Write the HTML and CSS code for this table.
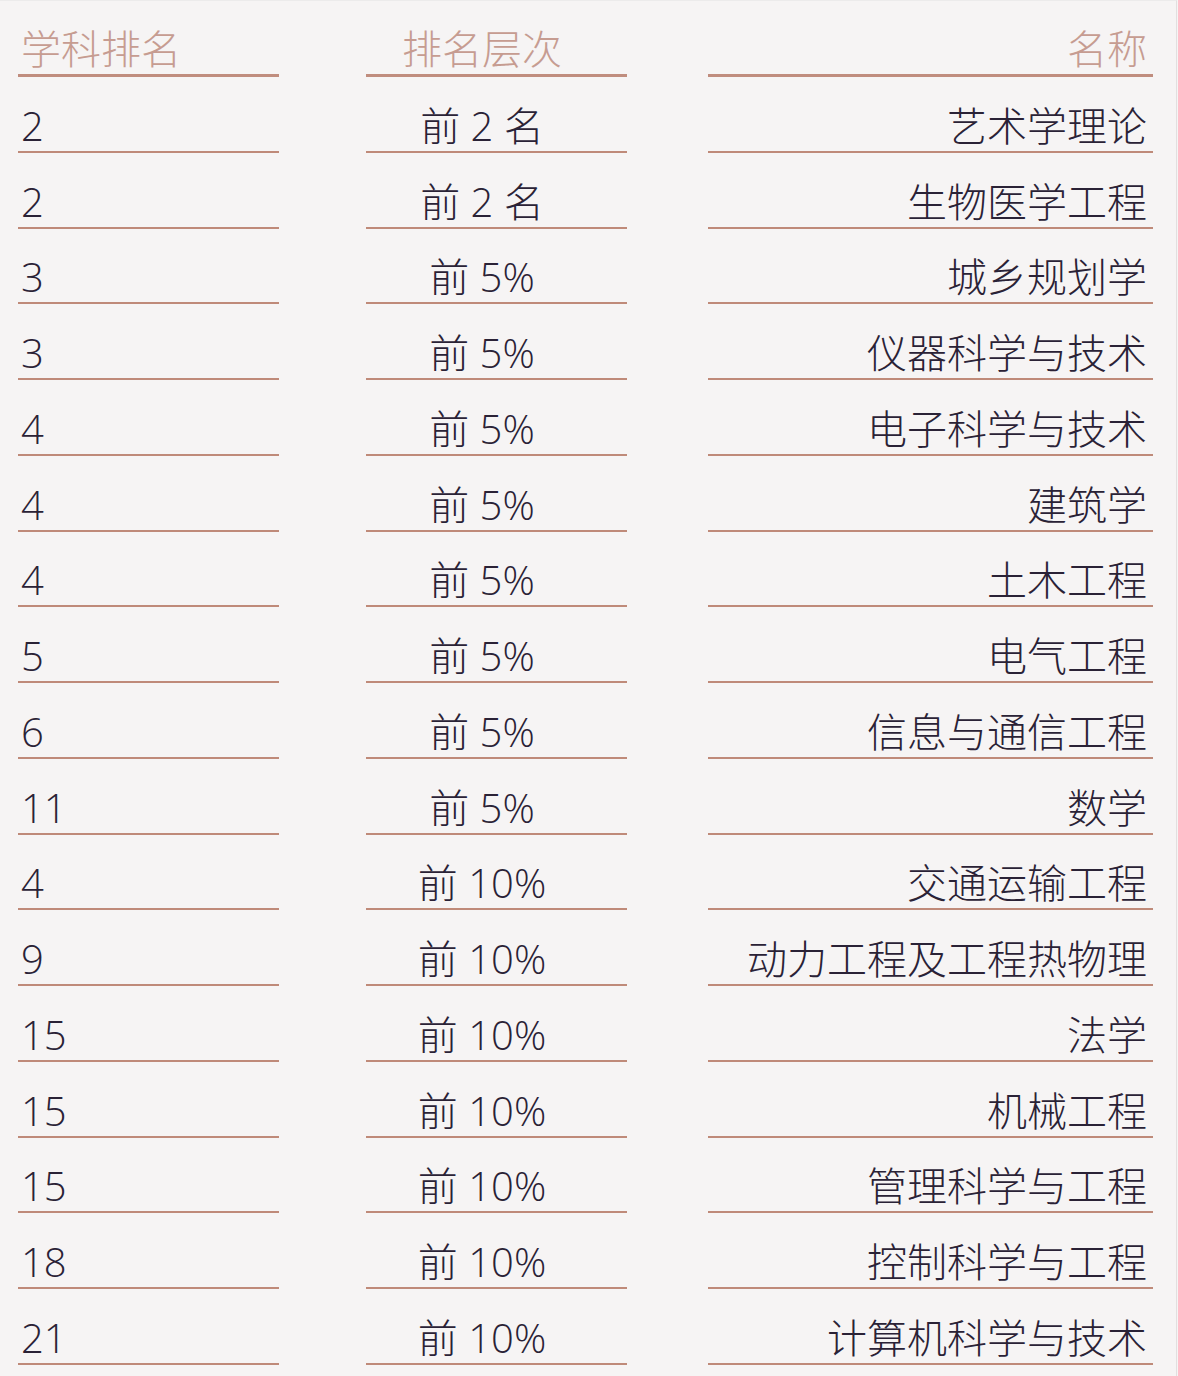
FILE: index.html
```html
<!DOCTYPE html>
<html lang="zh-CN">
<head>
<meta charset="utf-8">
<title>学科排名</title>
<link rel="stylesheet" href="styles.css">
</head>
<body>
<div class="page">
  <div class="table">
    <div class="cell head c1">学科排名</div>
    <div class="cell head c2">排名层次</div>
    <div class="cell head c3">名称</div>

    <div class="cell c1">2</div><div class="cell c2">前 2 名</div><div class="cell c3">艺术学理论</div>
    <div class="cell c1">2</div><div class="cell c2">前 2 名</div><div class="cell c3">生物医学工程</div>
    <div class="cell c1">3</div><div class="cell c2">前 5%</div><div class="cell c3">城乡规划学</div>
    <div class="cell c1">3</div><div class="cell c2">前 5%</div><div class="cell c3">仪器科学与技术</div>
    <div class="cell c1">4</div><div class="cell c2">前 5%</div><div class="cell c3">电子科学与技术</div>
    <div class="cell c1">4</div><div class="cell c2">前 5%</div><div class="cell c3">建筑学</div>
    <div class="cell c1">4</div><div class="cell c2">前 5%</div><div class="cell c3">土木工程</div>
    <div class="cell c1">5</div><div class="cell c2">前 5%</div><div class="cell c3">电气工程</div>
    <div class="cell c1">6</div><div class="cell c2">前 5%</div><div class="cell c3">信息与通信工程</div>
    <div class="cell c1">11</div><div class="cell c2">前 5%</div><div class="cell c3">数学</div>
    <div class="cell c1">4</div><div class="cell c2">前 10%</div><div class="cell c3">交通运输工程</div>
    <div class="cell c1">9</div><div class="cell c2">前 10%</div><div class="cell c3">动力工程及工程热物理</div>
    <div class="cell c1">15</div><div class="cell c2">前 10%</div><div class="cell c3">法学</div>
    <div class="cell c1">15</div><div class="cell c2">前 10%</div><div class="cell c3">机械工程</div>
    <div class="cell c1">15</div><div class="cell c2">前 10%</div><div class="cell c3">管理科学与工程</div>
    <div class="cell c1">18</div><div class="cell c2">前 10%</div><div class="cell c3">控制科学与工程</div>
    <div class="cell c1">21</div><div class="cell c2">前 10%</div><div class="cell c3">计算机科学与技术</div>
  </div>
</div>
</body>
</html>
```

FILE: styles.css
```css
html, body {
  margin: 0;
  padding: 0;
  background: #f6f4f4;
}

.page {
  width: 1177px;
  height: 1376px;
  border-right: 1px solid #e2dfdf;
  border-top: 1px solid #ecebeb;
  box-sizing: border-box;
  padding-left: 18px;
  font-family: "Open Sans", "Noto Sans CJK SC", sans-serif;
  font-weight: 300;
}

.table {
  display: grid;
  grid-template-columns: 261px 87px 261px 81px 445px;
  grid-template-rows: 77px;
  grid-auto-rows: 75.75px;
  margin-top: -1px;
}

.cell {
  display: flex;
  align-items: flex-end;
  border-bottom: 2px solid #bf8a79;
  font-size: 40px;
  line-height: 40px;
  color: #2a2236;
  padding-bottom: 5px;
}

.head {
  border-bottom: 3px solid #c08d7e;
  color: #c69c91;
  padding-bottom: 5px;
}

.c1 {
  grid-column: 1;
  padding-left: 3px;
}

.c2 {
  grid-column: 3;
  justify-content: center;
  padding-right: 29px;
}

.c3 {
  grid-column: 5;
  justify-content: flex-end;
  padding-right: 6px;
}
```
